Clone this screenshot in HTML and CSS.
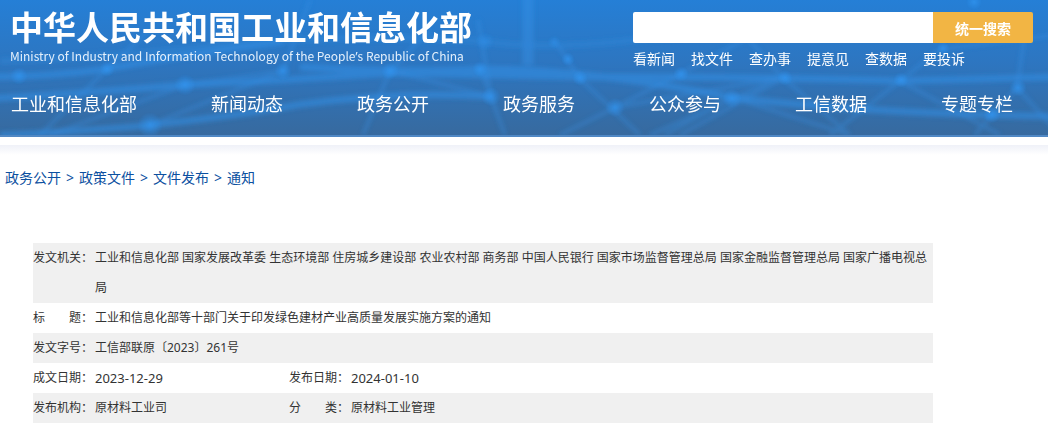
FILE: index.html
```html
<!DOCTYPE html>
<html lang="zh-CN">
<head>
<meta charset="utf-8">
<title>中华人民共和国工业和信息化部</title>
<link rel="stylesheet" href="styles.css">
</head>
<body>
<header class="header">
  <svg class="header-art" viewBox="0 0 1048 137" preserveAspectRatio="none" aria-hidden="true">
    <defs>
      <radialGradient id="node"><stop offset="0" stop-color="#3296f2"/><stop offset="1" stop-color="#3296f2" stop-opacity="0"/></radialGradient>
      <filter id="soft" x="-5%" y="-20%" width="110%" height="140%"><feGaussianBlur stdDeviation="2"/></filter>
    </defs>
    <g fill="none" stroke="#3593ea" filter="url(#soft)">
      <g stroke-width="7" opacity=".5">
        <path d="M-10 78Q50 78 107 70Q180 56 283 42"/>
        <path d="M-10 100Q90 94 185 86Q280 82 390 74L580 78Q760 78 900 82L1060 78"/>
        <path d="M0 137Q60 135 150 127Q240 117 300 106Q400 92 491 98"/>
        <path d="M300 68Q400 74 480 70Q590 70 732 99Q880 116 1060 118"/>
        <path d="M0 62Q110 58 200 48Q350 32 485 42Q540 50 620 42Q700 33 783 28" opacity=".5"/>
        <path d="M528 -5V66" stroke-width="11" opacity=".8"/>
      </g>
      <g stroke-width="4" opacity=".32">
        <path d="M40 137L107 70L150 30M50 137L185 86L283 72L310 0M150 127L283 72"/>
        <path d="M363 137L390 72L430 30M391 72L491 98L505 137M480 70L491 98L478 20M554 40L580 80L640 137"/>
        <path d="M615 109L680 75L745 40M615 109L560 137M615 109L780 79L650 137M732 99L665 137M732 99L850 137"/>
        <path d="M783 79L850 137M900 82L830 137M900 82L940 50L1060 35M900 82L1000 137M992 116L1017 89L1024 40M992 116L975 137M1017 89L1060 137M740 30L783 79L680 137"/>
      </g>
    </g>
    <g fill="url(#node)" opacity=".7">
      <circle cx="19" cy="77" r="9"/><circle cx="107" cy="70" r="8"/><circle cx="185" cy="86" r="11"/><circle cx="283" cy="72" r="9"/><circle cx="150" cy="127" r="13"/>
      <circle cx="390" cy="72" r="9"/><circle cx="480" cy="70" r="8"/><circle cx="491" cy="98" r="10"/><circle cx="485" cy="42" r="10" opacity=".6"/><circle cx="554" cy="43" r="7" opacity=".6"/><circle cx="568" cy="60" r="7"/><circle cx="580" cy="79" r="8"/><circle cx="615" cy="109" r="10"/>
      <circle cx="681" cy="75" r="8"/><circle cx="732" cy="100" r="10"/><circle cx="785" cy="79" r="8"/><circle cx="901" cy="81" r="8"/><circle cx="1018" cy="89" r="9"/><circle cx="992" cy="116" r="9"/><circle cx="943" cy="49" r="7"/><circle cx="974" cy="2" r="8"/>
    </g>
  </svg>
  <div class="masthead">
    <div class="brand">
      <h1 class="brand-name">中华人民共和国工业和信息化部</h1>
      <p class="brand-sub" lang="en">Ministry of Industry and Information Technology of the People<span class="latin">’</span>s Republic of China</p>
    </div>
    <div class="search">
      <form class="search-form">
        <input class="search-input" type="text" aria-label="搜索">
        <button class="search-button" type="submit">统一搜索</button>
      </form>
      <nav class="quick-links">
        <a href="#">看新闻</a>
        <a href="#">找文件</a>
        <a href="#">查办事</a>
        <a href="#">提意见</a>
        <a href="#">查数据</a>
        <a href="#">要投诉</a>
      </nav>
    </div>
  </div>
  <nav class="main-nav">
    <a href="#">工业和信息化部</a>
    <a href="#">新闻动态</a>
    <a href="#">政务公开</a>
    <a href="#">政务服务</a>
    <a href="#">公众参与</a>
    <a href="#">工信数据</a>
    <a href="#">专题专栏</a>
  </nav>
</header>
<main class="content">
  <nav class="breadcrumb">
    <a href="#">政务公开</a><span>&gt;</span><a href="#">政策文件</a><span>&gt;</span><a href="#">文件发布</a><span>&gt;</span><a href="#">通知</a>
  </nav>
  <table class="meta">
    <colgroup><col class="col-label"><col class="col-value"><col class="col-label"><col></colgroup>
    <tbody>
      <tr><th scope="row">发文机关：</th><td colspan="3">工业和信息化部 国家发展改革委 生态环境部 住房城乡建设部 农业农村部 商务部 中国人民银行 国家市场监督管理总局 国家金融监督管理总局 国家广播电视总局</td></tr>
      <tr><th scope="row">标　　题：</th><td colspan="3">工业和信息化部等十部门关于印发绿色建材产业高质量发展实施方案的通知</td></tr>
      <tr><th scope="row">发文字号：</th><td colspan="3">工信部联原〔2023〕261号</td></tr>
      <tr><th scope="row">成文日期：</th><td class="date">2023-12-29</td><th scope="row">发布日期：</th><td class="date">2024-01-10</td></tr>
      <tr><th scope="row">发布机构：</th><td>原材料工业司</td><th scope="row">分　　类：</th><td>原材料工业管理</td></tr>
    </tbody>
  </table>
</main>
</body>
</html>
```
FILE: styles.css
```css
* {
  box-sizing: border-box;
}

body {
  margin: 0;
  background: #fff;
  color: #333;
  font-family: "Noto Sans", "Noto Sans CJK SC", sans-serif;
  font-size: 12px;
}

a {
  color: inherit;
  text-decoration: none;
}

.header {
  position: relative;
  padding-bottom: 16px;
  border-bottom: 2px solid #5088c4;
  background: linear-gradient(#257fd6, #2d76c1 45%, #376a9f);
  color: #fff;
}

.header-art {
  position: absolute;
  inset: 0;
  width: 100%;
  height: 100%;
}

.masthead,
.main-nav {
  position: relative;
  display: flex;
  justify-content: space-between;
}

.masthead {
  gap: 16px;
  padding: 4px 15px 0 10px;
}

.brand-name {
  margin: 0;
  font-family: "Noto Sans CJK SC", sans-serif;
  font-size: 33px;
  line-height: 44px;
  font-weight: 700;
  white-space: nowrap;
}

.brand-sub {
  margin: 0;
  font-family: "Noto Sans CJK SC", sans-serif;
  font-size: 12px;
  line-height: 16px;
  white-space: nowrap;
  color: #e4f0fc;
}

.latin {
  font-family: "Noto Sans", sans-serif;
}

.search {
  width: 400px;
  padding-top: 8px;
}

.search-form {
  display: flex;
  height: 31px;
}

.search-input {
  flex: 1;
  min-width: 0;
  padding: 0 10px;
  border: 0;
  border-radius: 2px 0 0 2px;
  background: #fff;
  font: inherit;
}

.search-button {
  width: 100px;
  padding: 0;
  border: 0;
  border-radius: 0 2px 2px 0;
  background: #f2b544;
  color: #fff;
  font: inherit;
  font-size: 14px;
  font-weight: 700;
}

.quick-links {
  display: flex;
  gap: 16px;
  padding-top: 6px;
  font-size: 14px;
  line-height: 20px;
}

.main-nav {
  padding: 20px 35px 0 11px;
  font-size: 18px;
  line-height: 30px;
}

.content {
  margin-top: 8px;
  padding: 18px 0 12px;
  background: linear-gradient(#eff1f8, #fff 10px);
}

.breadcrumb {
  display: flex;
  gap: 5px;
  padding-left: 5px;
  color: #0c50a0;
  font-size: 14px;
  line-height: 30px;
}

.meta {
  width: calc(100% - 148px);
  margin: 50px 115px 0 33px;
  border-collapse: collapse;
  table-layout: fixed;
  line-height: 30px;
}

.meta tr:nth-child(odd) {
  background: #f0f0f0;
}

.meta th,
.meta td {
  padding: 0;
  font-weight: 400;
  text-align: left;
  vertical-align: top;
}

.meta .date {
  font-size: 13px;
}

.col-label {
  width: 62px;
}

.col-value {
  width: 194px;
}
```
